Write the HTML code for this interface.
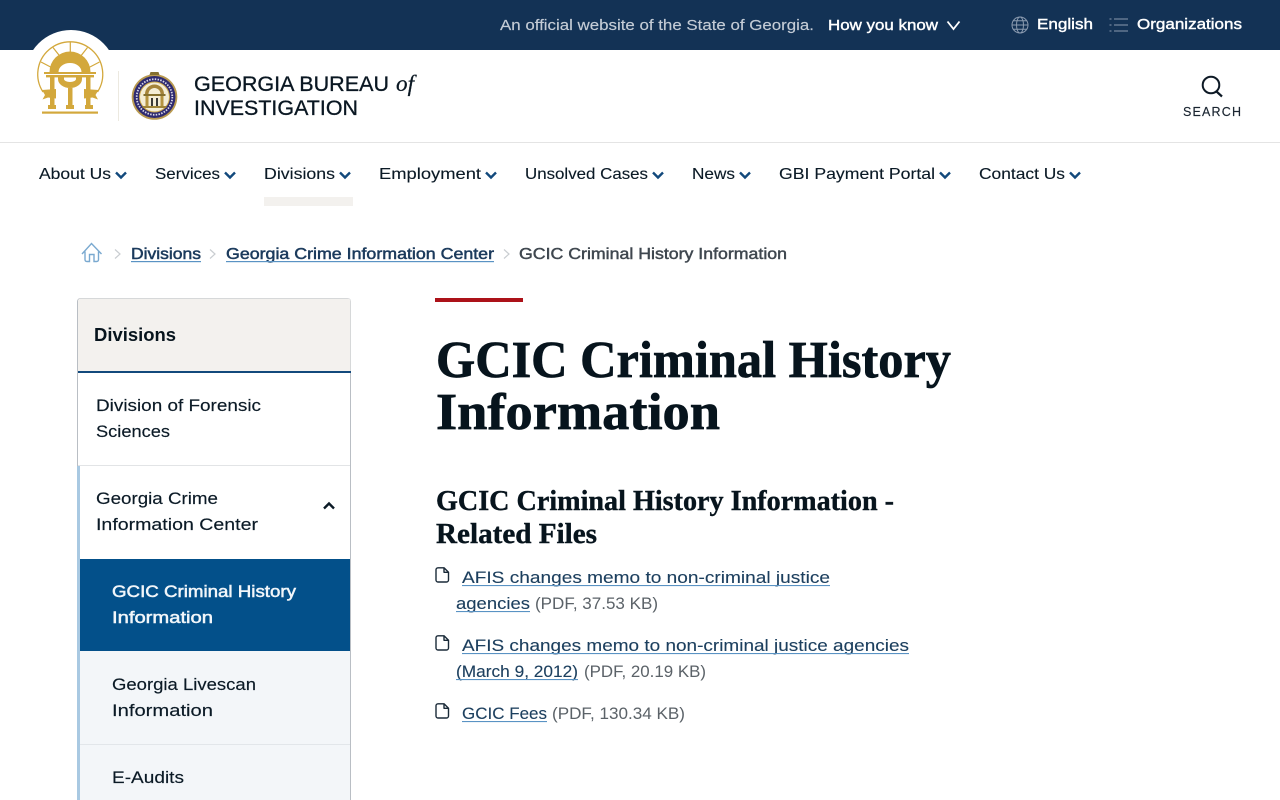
<!DOCTYPE html>
<html lang="en">
<head>
<meta charset="utf-8">
<title>GCIC Criminal History Information | Georgia Bureau of Investigation</title>
<style>
html,body{margin:0;padding:0;width:1280px;height:800px;overflow:hidden;background:#fff}
svg{display:block;position:absolute;left:0;top:0}
text{font-family:"Liberation Sans",sans-serif;white-space:pre}
.n{font-size:16px;fill:#0b1a26;stroke:#0b1a26;stroke-width:.12px}
.s{font-size:16.5px;fill:#0b1a26;stroke:#0b1a26;stroke-width:.15px}
.l{font-size:16.5px;fill:#1c3f5e;stroke:#1c3f5e;stroke-width:.12px}
.g{font-size:16.5px;fill:#5b6268}
.b{font-size:16px;fill:#1b3a5c;stroke:#1b3a5c;stroke-width:.5px}
.h{font-family:"Liberation Serif",serif;font-weight:700;fill:#07141d;stroke:#07141d}
.w{font-size:15px;fill:#fff;stroke:#fff;stroke-width:.4px}
.a{font-size:16.5px;fill:#f2f6fa;stroke:#f2f6fa;stroke-width:.5px}
.t{font-size:21px;fill:#0a1722;stroke:#0a1722;stroke-width:.3px}
.ch{fill:none;stroke:#12497c;stroke-width:2.4px}
.f{fill:none;stroke:#1a2a38;stroke-width:1.4px;stroke-linejoin:round}
.sep{fill:none;stroke:#c9cdd1;stroke-width:1.2px}
</style>
</head>
<body>
<svg width="1280" height="800" viewBox="0 0 1280 800" xmlns="http://www.w3.org/2000/svg">
<!-- top bar -->
<rect width="1280" height="50" fill="#133255"/>
<circle cx="71" cy="76" r="46" fill="#fff"/>
<rect x="0" y="50" width="1280" height="92" fill="#fff"/>
<rect x="0" y="142" width="1280" height="1" fill="#e4e4e4"/>
<text x="500" y="30" textLength="314" lengthAdjust="spacingAndGlyphs" style="font-size:15px;fill:#c4ccd6;stroke:#c4ccd6;stroke-width:.15px">An official website of the State of Georgia.</text>
<text x="828" y="30" textLength="110" lengthAdjust="spacingAndGlyphs" class="w">How you know</text>
<path d="M947.500 21.500L953.500 29L959.500 21.500" fill="none" stroke="#fff" stroke-width="1.800"/>
<g fill="none" stroke="#8b9bb0" stroke-width="1">
<circle cx="1020" cy="25" r="8"/><ellipse cx="1020" cy="25" rx="3.500" ry="8"/>
<path d="M1012 25H1028M1013.300 20.800H1026.700M1013.300 29.200H1026.700"/>
<path d="M1114 19H1128M1114 25H1128M1114 31H1128"/>
<path d="M1109.500 19H1111.500M1109.500 25H1111.500M1109.500 31H1111.500"/>
</g>
<text x="1037" y="29" textLength="56" lengthAdjust="spacingAndGlyphs" class="w">English</text>
<text x="1137" y="29" textLength="105" lengthAdjust="spacingAndGlyphs" class="w">Organizations</text>

<!-- Georgia arch logo -->
<g fill="#d3a83c">
<path d="M43 92A32.500 32.500 0 1 1 97.500 92" fill="none" stroke="#d3a83c" stroke-width="1.300"/>
<g stroke="#d3a83c" stroke-width="1.200"><path d="M70.300 42V54M53 47.500L60.500 57M87.500 47.500L80 57M41 62L52.500 68M99.500 62L88 68"/></g>
<path d="M49.500 72A20.500 20.500 0 0 1 90.500 72H81.500A11.500 9 0 0 0 58.500 72Z"/>
<rect x="44" y="72" width="52" height="2"/>
<rect x="46" y="75" width="48" height="2.400"/>
<path d="M58 77H82V79A12 9 0 0 1 58 79ZM64 77.500V79A6 3 0 0 0 76 79V77.500Z" fill-rule="evenodd"/>
<rect x="50" y="77" width="4.500" height="14"/><rect x="86" y="77" width="4.500" height="14"/>
<rect x="68" y="88" width="4.500" height="18"/>
<rect x="50" y="97" width="4.500" height="9"/><rect x="86" y="97" width="4.500" height="9"/>
<path d="M42 90L56 89V98.500L48 97.500L42.500 99.500L45 95Z"/>
<path d="M98.500 90L84 89V98.500L92.500 97.500L98 99.500L95.500 95Z"/>
<rect x="48" y="105" width="8" height="4"/><rect x="66" y="105" width="8" height="4"/><rect x="85" y="105" width="8" height="4"/>
<rect x="42" y="111.500" width="56" height="2.200"/>
</g>
<rect x="118" y="71" width="1" height="50" fill="#ece9e0"/>

<!-- seal -->
<circle cx="154.500" cy="97" r="22.800" fill="#b99a50"/>
<circle cx="154.500" cy="97" r="21" fill="#2e2a70"/>
<circle cx="154.500" cy="97" r="17.800" fill="none" stroke="#d8d6e6" stroke-width="1.800" stroke-dasharray="1.500 1.300"/>
<circle cx="154.500" cy="97" r="15.500" fill="#c9a64a"/>
<circle cx="154.500" cy="97" r="14.500" fill="#f4edd6"/>
<path d="M145 94A9.500 9.500 0 0 1 164 94H160.500A6 6 0 0 0 148.500 94Z" fill="#a5843a"/>
<rect x="143.500" y="94" width="22" height="2" fill="#85702f"/>
<path d="M145.500 96H148.500V106H145.500ZM160.500 96H163.500V106H160.500Z" fill="#b59440"/>
<path d="M151 98H153V106H151ZM156 98H158V106H156Z" fill="#3a3a36"/>
<rect x="142.500" y="106" width="24" height="2" fill="#a08538"/>
<path d="M149.500 75H159.500L158.500 72H150.500Z" fill="#85702f"/>

<!-- site name -->
<text class="t" x="194" y="91" textLength="195" lengthAdjust="spacingAndGlyphs">GEORGIA BUREAU</text>
<text x="396" y="91" textLength="18" lengthAdjust="spacingAndGlyphs" style="font-family:'Liberation Serif',serif;font-style:italic;font-size:23px;fill:#0a1722;stroke:#0a1722;stroke-width:.25px">of</text>
<text class="t" x="194" y="115" textLength="164" lengthAdjust="spacingAndGlyphs">INVESTIGATION</text>

<!-- search -->
<circle cx="1211" cy="85" r="8.300" fill="none" stroke="#0e1a26" stroke-width="2"/>
<path d="M1216.500 91.500L1222 96.500" stroke="#0e1a26" stroke-width="2.200" fill="none"/>
<text x="1183" y="116" textLength="58" lengthAdjust="spacing" style="font-size:12.500px;fill:#1a2530;stroke:#1a2530;stroke-width:.15px">SEARCH</text>

<!-- nav -->
<text class="n" x="39" y="179" textLength="72" lengthAdjust="spacingAndGlyphs">About Us</text>
<path class="ch" d="M116 172.500L121 177.500L126 172.500"/>
<text class="n" x="155" y="179" textLength="65" lengthAdjust="spacingAndGlyphs">Services</text>
<path class="ch" d="M225 172.500L230 177.500L235 172.500"/>
<text class="n" x="264" y="179" textLength="71" lengthAdjust="spacingAndGlyphs">Divisions</text>
<path class="ch" d="M340 172.500L345 177.500L350 172.500"/>
<text class="n" x="379" y="179" textLength="102" lengthAdjust="spacingAndGlyphs">Employment</text>
<path class="ch" d="M486 172.500L491 177.500L496 172.500"/>
<text class="n" x="525" y="179" textLength="123" lengthAdjust="spacingAndGlyphs">Unsolved Cases</text>
<path class="ch" d="M653 172.500L658 177.500L663 172.500"/>
<text class="n" x="692" y="179" textLength="43" lengthAdjust="spacingAndGlyphs">News</text>
<path class="ch" d="M740 172.500L745 177.500L750 172.500"/>
<text class="n" x="779" y="179" textLength="156" lengthAdjust="spacingAndGlyphs">GBI Payment Portal</text>
<path class="ch" d="M940 172.500L945 177.500L950 172.500"/>
<text class="n" x="979" y="179" textLength="86" lengthAdjust="spacingAndGlyphs">Contact Us</text>
<path class="ch" d="M1070 172.500L1075 177.500L1080 172.500"/>
<rect x="264" y="197" width="89" height="9" fill="#f3f1ee"/>

<!-- breadcrumb -->
<path d="M82 254L91.500 243.500L101.500 254M85 251.500V259.500Q85 261.500 87 261.500H89.500V254.500H94V261.500H96.500Q98.500 261.500 98.500 259.500V251.500" fill="none" stroke="#7aa9d0" stroke-width="1.400"/>
<path class="sep" d="M115 249.500L120 254L115 258.500"/>
<text class="b" x="131" y="259" textLength="70" lengthAdjust="spacingAndGlyphs">Divisions</text>
<rect x="131" y="261" width="70" height="1.200" fill="#5a93c4"/>
<path class="sep" d="M210 249.500L215 254L210 258.500"/>
<text class="b" x="226" y="259" textLength="268" lengthAdjust="spacingAndGlyphs">Georgia Crime Information Center</text>
<rect x="226" y="261" width="268" height="1.200" fill="#5a93c4"/>
<path class="sep" d="M504 249.500L509 254L504 258.500"/>
<text x="519" y="259" textLength="268" lengthAdjust="spacingAndGlyphs" style="font-size:16px;fill:#3f474f;stroke:#3f474f;stroke-width:.45px">GCIC Criminal History Information</text>

<!-- sidebar -->
<rect x="77.500" y="298.500" width="273" height="520" rx="3" fill="#fff" stroke="#b9bec4"/>
<path d="M78 371V301a2.500 2.500 0 0 1 2.500-2.500H348a2.500 2.500 0 0 1 2.500 2.500V371Z" fill="#f3f1ee"/>
<rect x="78" y="371" width="273" height="2" fill="#12497c"/>
<text x="94" y="341" textLength="82" lengthAdjust="spacingAndGlyphs" style="font-size:18.500px;font-weight:700;fill:#07141d">Divisions</text>
<text class="s" x="96" y="411" textLength="165" lengthAdjust="spacingAndGlyphs">Division of Forensic</text>
<text class="s" x="96" y="437" textLength="74" lengthAdjust="spacingAndGlyphs">Sciences</text>
<rect x="78" y="465" width="272" height="1" fill="#e2e4e6"/>
<rect x="77" y="466" width="3" height="334" fill="#a9c9e2"/>
<text class="s" x="96" y="504" textLength="122" lengthAdjust="spacingAndGlyphs">Georgia Crime</text>
<text class="s" x="96" y="530" textLength="162" lengthAdjust="spacingAndGlyphs">Information Center</text>
<path d="M324 508.500L329 503.500L334 508.500" fill="none" stroke="#0b1a26" stroke-width="2.400"/>
<rect x="80" y="559" width="270" height="92" fill="#03508a"/>
<text class="a" x="112" y="597" textLength="184" lengthAdjust="spacingAndGlyphs">GCIC Criminal History</text>
<text class="a" x="112" y="623" textLength="101" lengthAdjust="spacingAndGlyphs">Information</text>
<rect x="80" y="651" width="270" height="149" fill="#f3f6f9"/>
<text class="s" x="112" y="690" textLength="144" lengthAdjust="spacingAndGlyphs">Georgia Livescan</text>
<text class="s" x="112" y="716" textLength="101" lengthAdjust="spacingAndGlyphs">Information</text>
<rect x="80" y="744" width="270" height="1" fill="#e2e6ea"/>
<text class="s" x="112" y="783" textLength="72" lengthAdjust="spacingAndGlyphs">E-Audits</text>

<!-- main -->
<rect x="435" y="298" width="88" height="4" fill="#ac1219"/>
<text class="h" x="436" y="377" textLength="515" lengthAdjust="spacingAndGlyphs" style="font-size:52px;stroke-width:.7px">GCIC Criminal History</text>
<text class="h" x="436" y="429" textLength="284" lengthAdjust="spacingAndGlyphs" style="font-size:52px;stroke-width:.7px">Information</text>
<text class="h" x="436" y="510" textLength="458" lengthAdjust="spacingAndGlyphs" style="font-size:29px;stroke-width:.4px">GCIC Criminal History Information -</text>
<text class="h" x="436" y="543" textLength="161" lengthAdjust="spacingAndGlyphs" style="font-size:29px;stroke-width:.4px">Related Files</text>

<!-- files -->
<path class="f" d="M438 567.800H444L448.500 572.300V580A2 2 0 0 1 446.500 582H438A2 2 0 0 1 436 580V569.800A2 2 0 0 1 438 567.800ZM444 567.800V572.300H448.500"/>
<text class="l" x="462" y="583" textLength="368" lengthAdjust="spacingAndGlyphs">AFIS changes memo to non-criminal justice</text>
<rect x="462" y="585" width="368" height="1.100" fill="#5a93c4"/>
<text class="l" x="456" y="609" textLength="74" lengthAdjust="spacingAndGlyphs">agencies</text>
<rect x="456" y="611" width="74" height="1.100" fill="#5a93c4"/>
<text class="g" x="535" y="609" textLength="123" lengthAdjust="spacingAndGlyphs">(PDF, 37.53 KB)</text>

<path class="f" d="M438 635.800H444L448.500 640.300V648A2 2 0 0 1 446.500 650H438A2 2 0 0 1 436 648V637.800A2 2 0 0 1 438 635.800ZM444 635.800V640.300H448.500"/>
<text class="l" x="462" y="651" textLength="447" lengthAdjust="spacingAndGlyphs">AFIS changes memo to non-criminal justice agencies</text>
<rect x="462" y="653" width="447" height="1.100" fill="#5a93c4"/>
<text class="l" x="456" y="677" textLength="122" lengthAdjust="spacingAndGlyphs">(March 9, 2012)</text>
<rect x="456" y="679" width="122" height="1.100" fill="#5a93c4"/>
<text class="g" x="584" y="677" textLength="122" lengthAdjust="spacingAndGlyphs">(PDF, 20.19 KB)</text>

<path class="f" d="M438 703.800H444L448.500 708.300V716A2 2 0 0 1 446.500 718H438A2 2 0 0 1 436 716V705.800A2 2 0 0 1 438 703.800ZM444 703.800V708.300H448.500"/>
<text class="l" x="462" y="719" textLength="85" lengthAdjust="spacingAndGlyphs">GCIC Fees</text>
<rect x="462" y="721" width="85" height="1.100" fill="#5a93c4"/>
<text class="g" x="552" y="719" textLength="133" lengthAdjust="spacingAndGlyphs">(PDF, 130.34 KB)</text>
</svg>
</body>
</html>
